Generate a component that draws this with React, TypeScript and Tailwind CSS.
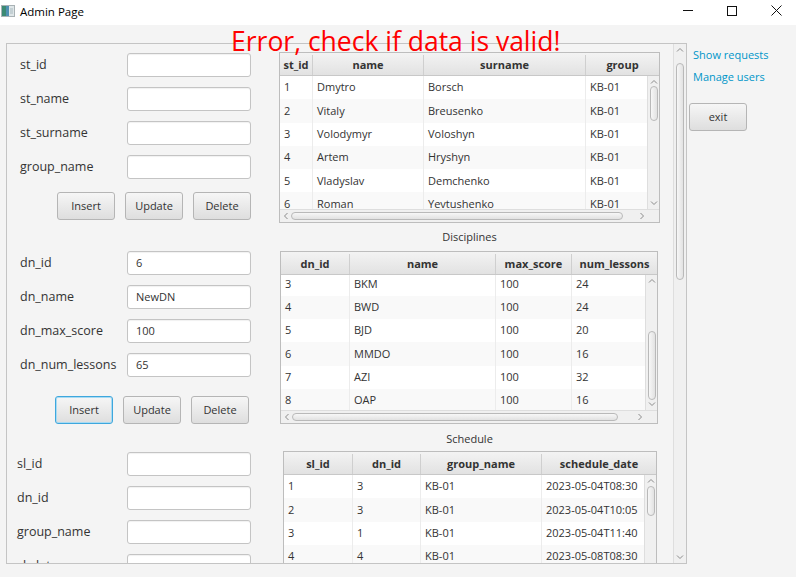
import React from 'react';

type Dir = 'up' | 'down' | 'left' | 'right';

const students = [
  ['1', 'Dmytro', 'Borsch', 'KB-01'],
  ['2', 'Vitaly', 'Breusenko', 'KB-01'],
  ['3', 'Volodymyr', 'Voloshyn', 'KB-01'],
  ['4', 'Artem', 'Hryshyn', 'KB-01'],
  ['5', 'Vladyslav', 'Demchenko', 'KB-01'],
  ['6', 'Roman', 'Yevtushenko', 'KB-01'],
  ['7', 'Oleh', 'Kovalenko', 'KB-01'],
];

const disciplines = [
  ['3', 'BKM', '100', '24'],
  ['4', 'BWD', '100', '24'],
  ['5', 'BJD', '100', '20'],
  ['6', 'MMDO', '100', '16'],
  ['7', 'AZI', '100', '32'],
  ['8', 'OAP', '100', '16'],
  ['9', 'KPI', '100', '16'],
];

const schedule = [
  ['1', '3', 'KB-01', '2023-05-04T08:30'],
  ['2', '3', 'KB-01', '2023-05-04T10:05'],
  ['3', '1', 'KB-01', '2023-05-04T11:40'],
  ['4', '4', 'KB-01', '2023-05-08T08:30'],
  ['5', '2', 'KB-01', '2023-05-08T10:05'],
];

function Chevron({ dir }: { dir: Dir }) {
  const d = {
    up: 'M1 5.5 L4 2.5 L7 5.5',
    down: 'M1 2.5 L4 5.5 L7 2.5',
    left: 'M5.5 1 L2.5 4 L5.5 7',
    right: 'M2.5 1 L5.5 4 L2.5 7',
  }[dir];
  return (
    <svg width="8" height="8" viewBox="0 0 8 8">
      <path d={d} fill="none" stroke="#8c8c8c" strokeWidth="1" />
    </svg>
  );
}

function VScroll({ top, size, w = 12 }: { top: number; size: number; w?: number }) {
  return (
    <div className="h-full shrink-0 flex flex-col items-center bg-[#f0f0f0] border-l border-[#dedede]" style={{ width: w }}>
      <div className="w-full shrink-0 flex justify-center pt-[2px]" style={{ height: top }}>
        <Chevron dir="up" />
      </div>
      <div className="w-[8px] shrink-0 rounded-[4px] border border-[#b9b9b9] bg-gradient-to-r from-[#f7f7f7] to-[#e2e2e2]" style={{ height: size }} />
      <div className="flex-1" />
      <div className="h-[10px] shrink-0 flex justify-center">
        <Chevron dir="down" />
      </div>
    </div>
  );
}

function HScroll({ left, size }: { left: number; size: number }) {
  return (
    <div className="h-[13px] flex items-center bg-[#f0f0f0] border-t border-[#dedede]">
      <div className="h-full flex items-center pl-[2px]" style={{ width: left }}>
        <Chevron dir="left" />
      </div>
      <div className="h-[8px] rounded-[4px] border border-[#b9b9b9] bg-gradient-to-b from-[#f7f7f7] to-[#e2e2e2]" style={{ width: size }} />
      <div className="flex-1" />
      <div className="w-[10px] flex justify-center">
        <Chevron dir="right" />
      </div>
    </div>
  );
}

type TableProps = {
  cols: { title: string; w: number }[];
  rows: string[][];
  width: number;
  bodyH: number;
  offset?: number;
  v: [number, number];
  h?: [number, number];
};

function Table({ cols, rows, width, bodyH, offset = 0, v, h }: TableProps) {
  return (
    <div className="border border-[#bdbdbd] bg-white flex flex-col shrink-0" style={{ width }}>
      <div className="flex shrink-0 h-[23px] pt-[2px] border-b border-[#c8c8c8] bg-gradient-to-b from-[#f3f3f3] to-[#e2e2e2]">
        {cols.map((c, i) => (
          <div
            key={c.title}
            className={
              i === cols.length - 1
                ? 'flex-1 flex items-center justify-center text-[11px] font-bold text-[#333]'
                : 'flex items-center justify-center text-[11px] font-bold text-[#333] border-r border-[#cfcfcf]'
            }
            style={i === cols.length - 1 ? undefined : { width: c.w }}
          >
            {c.title}
          </div>
        ))}
      </div>
      <div className="flex shrink-0" style={{ height: bodyH }}>
        <div className="flex-1 overflow-hidden">
          <div style={{ marginTop: -offset }}>
            {rows.map((r, ri) => (
              <div key={ri} className={ri % 2 ? 'flex h-[23.3px] bg-[#f9f9f9]' : 'flex h-[23.3px] bg-white'}>
                {r.map((cell, ci) => (
                  <div
                    key={ci}
                    className={
                      ci === r.length - 1
                        ? 'flex-1 flex items-center pl-[4px] text-[11px] text-[#333] whitespace-nowrap overflow-hidden'
                        : 'flex items-center pl-[4px] text-[11px] text-[#333] whitespace-nowrap overflow-hidden border-r border-[#ececec]'
                    }
                    style={ci === r.length - 1 ? undefined : { width: cols[ci].w }}
                  >
                    {cell}
                  </div>
                ))}
              </div>
            ))}
          </div>
        </div>
        <VScroll top={v[0]} size={v[1]} />
      </div>
      {h && (
        <div className="flex shrink-0 bg-[#f0f0f0]">
          <div className="flex-1">
            <HScroll left={h[0]} size={h[1]} />
          </div>
          <div className="w-[12px] border-t border-[#dedede]" />
        </div>
      )}
    </div>
  );
}

function Field({ label, value = '', wide }: { label: string; value?: string; wide?: boolean }) {
  return (
    <div className="flex items-center h-[24px] shrink-0">
      <span className={wide ? 'w-[110px] text-[12.5px] text-[#333]' : 'w-[107px] text-[12.5px] text-[#333]'}>{label}</span>
      <div className="w-[124px] h-[24px] bg-white border border-[#c4c4c4] rounded-[3px] shadow-[inset_0_1px_1px_rgba(0,0,0,0.06)] flex items-center pl-[8px] text-[11px] text-[#333]">
        {value}
      </div>
    </div>
  );
}

function Btn({ children, focused }: { children: React.ReactNode; focused?: boolean }) {
  return (
    <div
      className={
        focused
          ? 'w-[58px] h-[28px] shrink-0 rounded-[3px] border border-[#3ea7dd] shadow-[inset_0_0_0_1px_#a9dbf3] bg-gradient-to-b from-[#f6f6f6] to-[#dedede] flex items-center justify-center text-[11px] text-[#333]'
          : 'w-[58px] h-[28px] shrink-0 rounded-[3px] border border-[#b5b5b5] bg-gradient-to-b from-[#f6f6f6] to-[#dedede] flex items-center justify-center text-[11px] text-[#333]'
      }
    >
      {children}
    </div>
  );
}

function LeftColumn() {
  return (
    <div className="w-[272px] shrink-0 pl-[13px] pt-[9px] flex flex-col">
      <div className="flex flex-col shrink-0 gap-[10px]">
        <Field label="st_id" />
        <Field label="st_name" />
        <Field label="st_surname" />
        <Field label="group_name" />
      </div>
      <div className="flex shrink-0 gap-[10px] ml-[37px] mt-[13px]">
        <Btn>Insert</Btn>
        <Btn>Update</Btn>
        <Btn>Delete</Btn>
      </div>
      <div className="flex flex-col shrink-0 gap-[10px] mt-[31px]">
        <Field label="dn_id" value="6" />
        <Field label="dn_name" value="NewDN" />
        <Field label="dn_max_score" value="100" />
        <Field label="dn_num_lessons" value="65" />
      </div>
      <div className="flex shrink-0 gap-[10px] ml-[35px] mt-[19px]">
        <Btn focused>Insert</Btn>
        <Btn>Update</Btn>
        <Btn>Delete</Btn>
      </div>
      <div className="flex flex-col shrink-0 gap-[10px] mt-[28px] -ml-[3px]">
        <Field label="sl_id" wide />
        <Field label="dn_id" wide />
        <Field label="group_name" wide />
        <Field label="sl_date" wide />
      </div>
    </div>
  );
}

function RightColumn() {
  return (
    <div className="flex flex-col pt-[8px] w-[394px] shrink-0">
      <Table
        width={381}
        bodyH={133}
        cols={[
          { title: 'st_id', w: 33 },
          { title: 'name', w: 111 },
          { title: 'surname', w: 162 },
          { title: 'group', w: 0 },
        ]}
        rows={students}
        v={[10, 35]}
        h={[11, 332]}
      />
      <div className="h-[28px] shrink-0 w-[381px] flex items-center justify-center text-[11px] text-[#333]">Disciplines</div>
      <div className="ml-[1px] shrink-0">
        <Table
          width={378}
          bodyH={135}
          offset={2.5}
          cols={[
            { title: 'dn_id', w: 69 },
            { title: 'name', w: 146 },
            { title: 'max_score', w: 76 },
            { title: 'num_lessons', w: 0 },
          ]}
          rows={disciplines}
          v={[56, 69]}
          h={[11, 326]}
        />
      </div>
      <div className="h-[27px] shrink-0 w-[381px] flex items-center justify-center pt-[3px] text-[11px] text-[#333]">Schedule</div>
      <div className="ml-[4px] shrink-0">
        <Table
          width={374}
          bodyH={120}
          cols={[
            { title: 'sl_id', w: 69 },
            { title: 'dn_id', w: 68 },
            { title: 'group_name', w: 121 },
            { title: 'schedule_date', w: 0 },
          ]}
          rows={schedule}
          v={[11, 30]}
        />
      </div>
    </div>
  );
}

function TitleBar() {
  return (
    <div className="h-[25px] bg-white flex items-center">
      <svg className="ml-[1px] mb-[3px]" width="14" height="14" viewBox="0 0 14 14">
        <rect x="0.5" y="1.5" width="13" height="11" fill="#dfe6e8" stroke="#a9b2b5" />
        <rect x="1" y="2" width="4" height="10" fill="#3b8a73" />
        <rect x="5" y="2" width="3" height="10" fill="#4f8fb0" />
        <rect x="9" y="4" width="3" height="6" fill="#c4d0d4" />
      </svg>
      <span className="ml-[5px] mb-[2px] text-[11.5px] text-black">Admin Page</span>
      <div className="ml-auto flex h-full pb-[4px]">
        <div className="w-[44px] flex items-center justify-center">
          <div className="w-[10px] h-[1px] bg-[#111]" />
        </div>
        <div className="w-[44px] flex items-center justify-center">
          <div className="w-[10px] h-[10px] border border-[#111]" />
        </div>
        <div className="w-[42px] flex items-center justify-center pl-[2px]">
          <svg width="11" height="11" viewBox="0 0 11 11">
            <path d="M0.5 0.5 L10.5 10.5 M10.5 0.5 L0.5 10.5" stroke="#111" strokeWidth="1" />
          </svg>
        </div>
      </div>
    </div>
  );
}

export default function App() {
  return (
    <div className="relative w-[796px] h-[577px] overflow-hidden bg-[#f4f4f4] font-['Open_Sans',sans-serif] text-[#333]">
      <TitleBar />
      <div className="flex items-start">
        <div className="ml-[6px] mt-[18px] w-[681px] h-[521px] border border-[#c4c4c4] flex">
          <div className="w-[666px] h-full overflow-hidden flex items-start">
            <LeftColumn />
            <RightColumn />
          </div>
          <VScroll top={19} size={217} w={13} />
        </div>
        <div className="mt-[19px] ml-[2px] flex flex-col items-start">
          <div className="h-[22px] leading-[22px] pl-[4px] text-[11px] text-[#0096c9]">Show requests</div>
          <div className="h-[22px] leading-[22px] pl-[4px] text-[11px] text-[#0096c9]">Manage users</div>
          <div className="mt-[15px]">
            <Btn>exit</Btn>
          </div>
        </div>
      </div>
      <div className="absolute left-[231px] top-[28px] text-[26.5px] leading-[26.5px] text-[#ff0000] whitespace-nowrap">
        Error, check if data is valid!
      </div>
    </div>
  );
}
